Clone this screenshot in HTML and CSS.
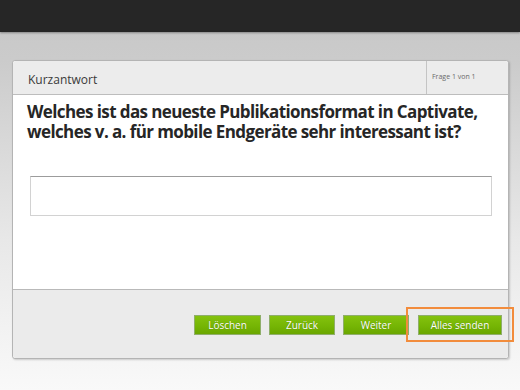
FILE: index.html
```html
<!DOCTYPE html>
<html lang="de">
<head>
    <meta charset="UTF-8">
    <title>Kurzantwort</title>
    <link rel="stylesheet" href="styles.css">
</head>
<body>
    <!-- Obere Leiste -->
    <div class="topbar"></div>

    <div class="stage">
        <div class="card">
            <!-- Kopfzeile -->
            <div class="card-header">
                <div class="title">Kurzantwort</div>
                <div class="counter">Frage 1 von 1</div>
            </div>

            <!-- Frage -->
            <div class="card-body">
                <h1 class="question">Welches ist das neueste Publikationsformat in Captivate, welches v. a. für mobile Endgeräte sehr interessant ist?</h1>
                <input type="text" class="answer">
            </div>

            <!-- Buttons -->
            <div class="card-footer">
                <button class="btn">Löschen</button>
                <button class="btn">Zurück</button>
                <button class="btn">Weiter</button>
                <button class="btn btn-wide highlighted">Alles senden</button>
            </div>
        </div>
    </div>
</body>
</html>
```

FILE: styles.css
```css
body {
    margin: 0;
    width: 520px;
    height: 390px;
    overflow: hidden;
    font-family: "Open Sans", Arial, sans-serif;
    background: linear-gradient(#c7c7c7 0px, #cbcbcb 60px, #e8e8e8 240px, #f9f9f9 390px);
}

/* Obere Leiste */
.topbar {
    height: 32px;
    background-color: #262626;
    box-shadow: 0 1px 2px rgba(0, 0, 0, 0.35);
}

.stage {
    padding: 28px 11px 0 12px;
}

/* Karte */
.card {
    height: 297px;
    display: flex;
    flex-direction: column;
    background: #ffffff;
    border: 1px solid #b4b4b4;
    border-radius: 3px;
    box-shadow: 1px 1px 2px rgba(0, 0, 0, 0.18);
}

.card-header {
    height: 33px;
    display: flex;
    background: #ececec;
    border-bottom: 1px solid #bdbdbd;
    border-radius: 3px 3px 0 0;
}

.card-header .title {
    flex: 1;
    padding-left: 15px;
    padding-top: 10px;
    font-size: 12px;
    color: #3a3a3a;
    border-right: 1px solid #c4c4c4;
}

.card-header .counter {
    width: 76px;
    padding-left: 5px;
    padding-top: 11px;
    font-size: 7px;
    color: #6a6a6a;
}

.card-body {
    flex: 1;
    padding: 7px 16px 0 14px;
}

.question {
    margin: 0;
    font-size: 17px;
    line-height: 20px;
    font-weight: bold;
    color: #262626;
    letter-spacing: -0.6px;
}

.answer {
    display: block;
    box-sizing: border-box;
    width: 462px;
    height: 40px;
    margin: 34px 0 0 3px;
    border: 1px solid #d2d2d2;
    border-top-color: #9c9c9c;
    background: #ffffff;
    outline: none;
}

/* Fußzeile */
.card-footer {
    height: 69px;
    display: flex;
    justify-content: flex-end;
    align-items: flex-start;
    gap: 8px;
    padding: 25px 6px 0 0;
    box-sizing: border-box;
    background: #ebebeb;
    border-top: 1px solid #b9b9b9;
    border-radius: 0 0 3px 3px;
}

.btn {
    position: relative;
    width: 66px;
    height: 20px;
    padding: 0;
    border: 1px solid #8fae6a;
    background: linear-gradient(#84c20e, #74b404 60%, #6aa600);
    color: #ffffff;
    font-family: "Open Sans", Arial, sans-serif;
    font-size: 10px;
    text-shadow: 0 0 1px rgba(0, 0, 0, 0.3);
    cursor: pointer;
}

.btn:first-child {
    width: 67px;
}

.btn-wide {
    width: 84px;
    margin-left: 1px;
}

.highlighted::after {
    content: "";
    position: absolute;
    left: -13px;
    top: -9px;
    right: -13px;
    bottom: -8px;
    border: 2px solid #f28c3c;
}
```
